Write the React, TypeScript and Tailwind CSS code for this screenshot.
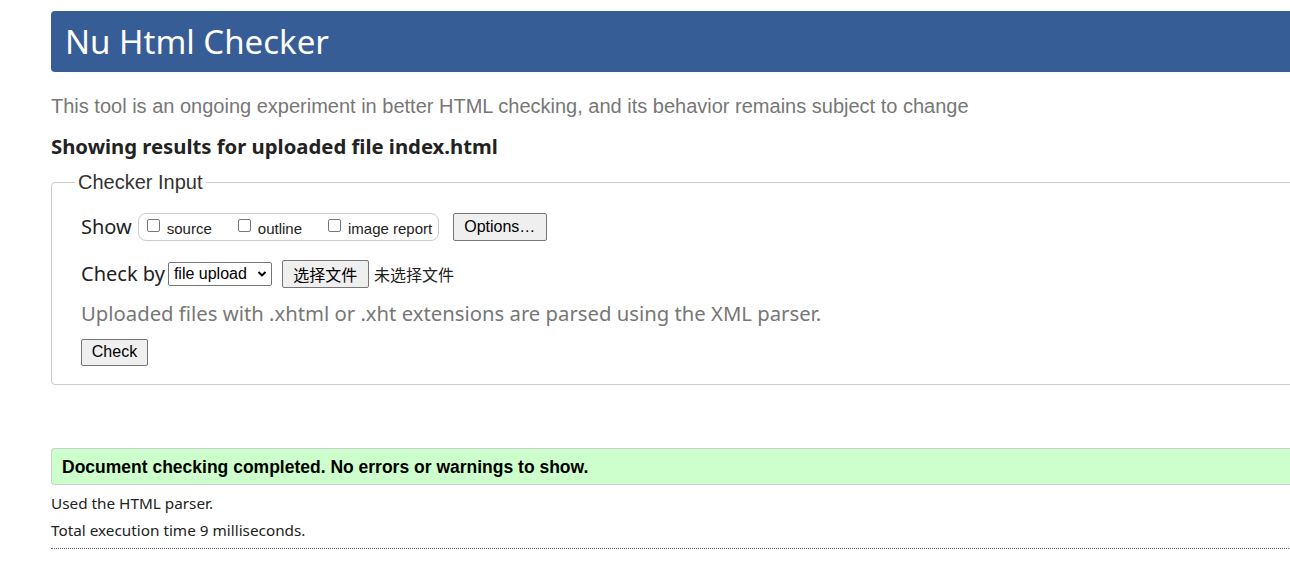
import React from "react";

const sans = "font-['Segoe_UI','Noto_Sans','Open_Sans',sans-serif]";
const arial = "font-['Liberation_Sans',Arial,sans-serif]";

const Btn = ({ children, className = "" }: { children: React.ReactNode; className?: string }) => (
  <button
    type="button"
    className={`${arial} bg-[#efefef] border border-[#767676] rounded-[2px] text-[16px] text-black leading-none ${className}`}
  >
    {children}
  </button>
);

const Check = ({ label }: { label: string }) => (
  <label className={`${arial} flex items-center text-[15px] text-[#222]`}>
    <span className="w-[13px] h-[13px] border border-[#767676] rounded-[2px] bg-white mr-[7px] -mt-[4px]" />
    <span className="mt-[3px]">{label}</span>
  </label>
);

const App = () => {
  return (
    <div className="w-screen h-[582px] overflow-hidden bg-white">
      <div className="w-[1300px] ml-[51px] pt-[11px] flex flex-col">
        <header className="h-[61px] bg-[#365d96] rounded-l-[4px] flex items-center pl-[14px]">
          <h1 className={`${sans} text-white text-[33px] leading-none`}>Nu Html Checker</h1>
        </header>

        <p className={`${arial} text-[#777] text-[20px] mt-[24px] leading-none`}>
          This tool is an ongoing experiment in better HTML checking, and its behavior remains subject to change
        </p>
        <h2 className={`${sans} font-bold text-[#222] text-[20.3px] mt-[20px] leading-none`}>
          Showing results for uploaded file index.html
        </h2>

        <fieldset className="mt-[16px] h-[213px] border border-[#ccc] rounded-l-[4px] pl-[29px] pt-[8px]">
          <legend className={`${arial} text-[20px] text-[#333] px-[3px] ml-[-6px] leading-none`}>Checker Input</legend>

          <div className="flex items-center mt-[12px]">
            <span className={`${sans} text-[20px] text-[#222] mr-[6px]`}>Show</span>
            <div className="flex items-center gap-[26px] h-[28px] w-[301px] border border-[#ccc] rounded-[8px] pl-[8px]">
              <Check label="source" />
              <Check label="outline" />
              <Check label="image report" />
            </div>
            <Btn className="ml-[14px] h-[28px] w-[94px] text-[16.5px]">Options…</Btn>
          </div>

          <div className="flex items-center mt-[17px]">
            <span className={`${sans} text-[20px] text-[#222] mr-[3px]`}>Check by</span>
            <div className={`${arial} h-[24px] w-[104px] border border-[#767676] rounded-[2px] flex items-center justify-between pl-[5px] pr-[4px] text-[16px] text-black`}>
              file upload
              <svg width="10" height="8" viewBox="0 0 10 8">
                <path d="M1.5 2 L5 5.5 L8.5 2" fill="none" stroke="#000" strokeWidth="1.8" />
              </svg>
            </div>
            <button
              type="button"
              className="ml-[10px] h-[28px] w-[87px] bg-[#efefef] border border-[#767676] rounded-[2px] text-[16px] text-black font-['Noto_Sans_CJK_SC',sans-serif] leading-none"
            >
              选择文件
            </button>
            <span className="ml-[5px] text-[16px] text-[#222] font-['Noto_Sans_CJK_SC',sans-serif]">未选择文件</span>
          </div>

          <p className={`${sans} text-[#777] text-[20.3px] mt-[9px]`}>
            Uploaded files with .xhtml or .xht extensions are parsed using the XML parser.
          </p>
          <div className="mt-[10px]">
            <Btn className="h-[27px] w-[67px]">Check</Btn>
          </div>
        </fieldset>

        <div className="mt-[63px] h-[37px] bg-[#ccffcc] border-y border-[#ccc] border-l rounded-l-[4px] flex items-center pl-[10px]">
          <p className={`${arial} font-bold text-[17.5px] text-black`}>
            Document checking completed. No errors or warnings to show.
          </p>
        </div>

        <p className={`${sans} text-[15.3px] text-[#222] mt-[8px] leading-[20px]`}>Used the HTML parser.</p>
        <p className={`${sans} text-[15.3px] text-[#222] mt-[7px] leading-[20px]`}>Total execution time 9 milliseconds.</p>
        <div className="mt-[8px] border-b border-dotted border-[#666]" />
      </div>
    </div>
  );
};

export default App;
